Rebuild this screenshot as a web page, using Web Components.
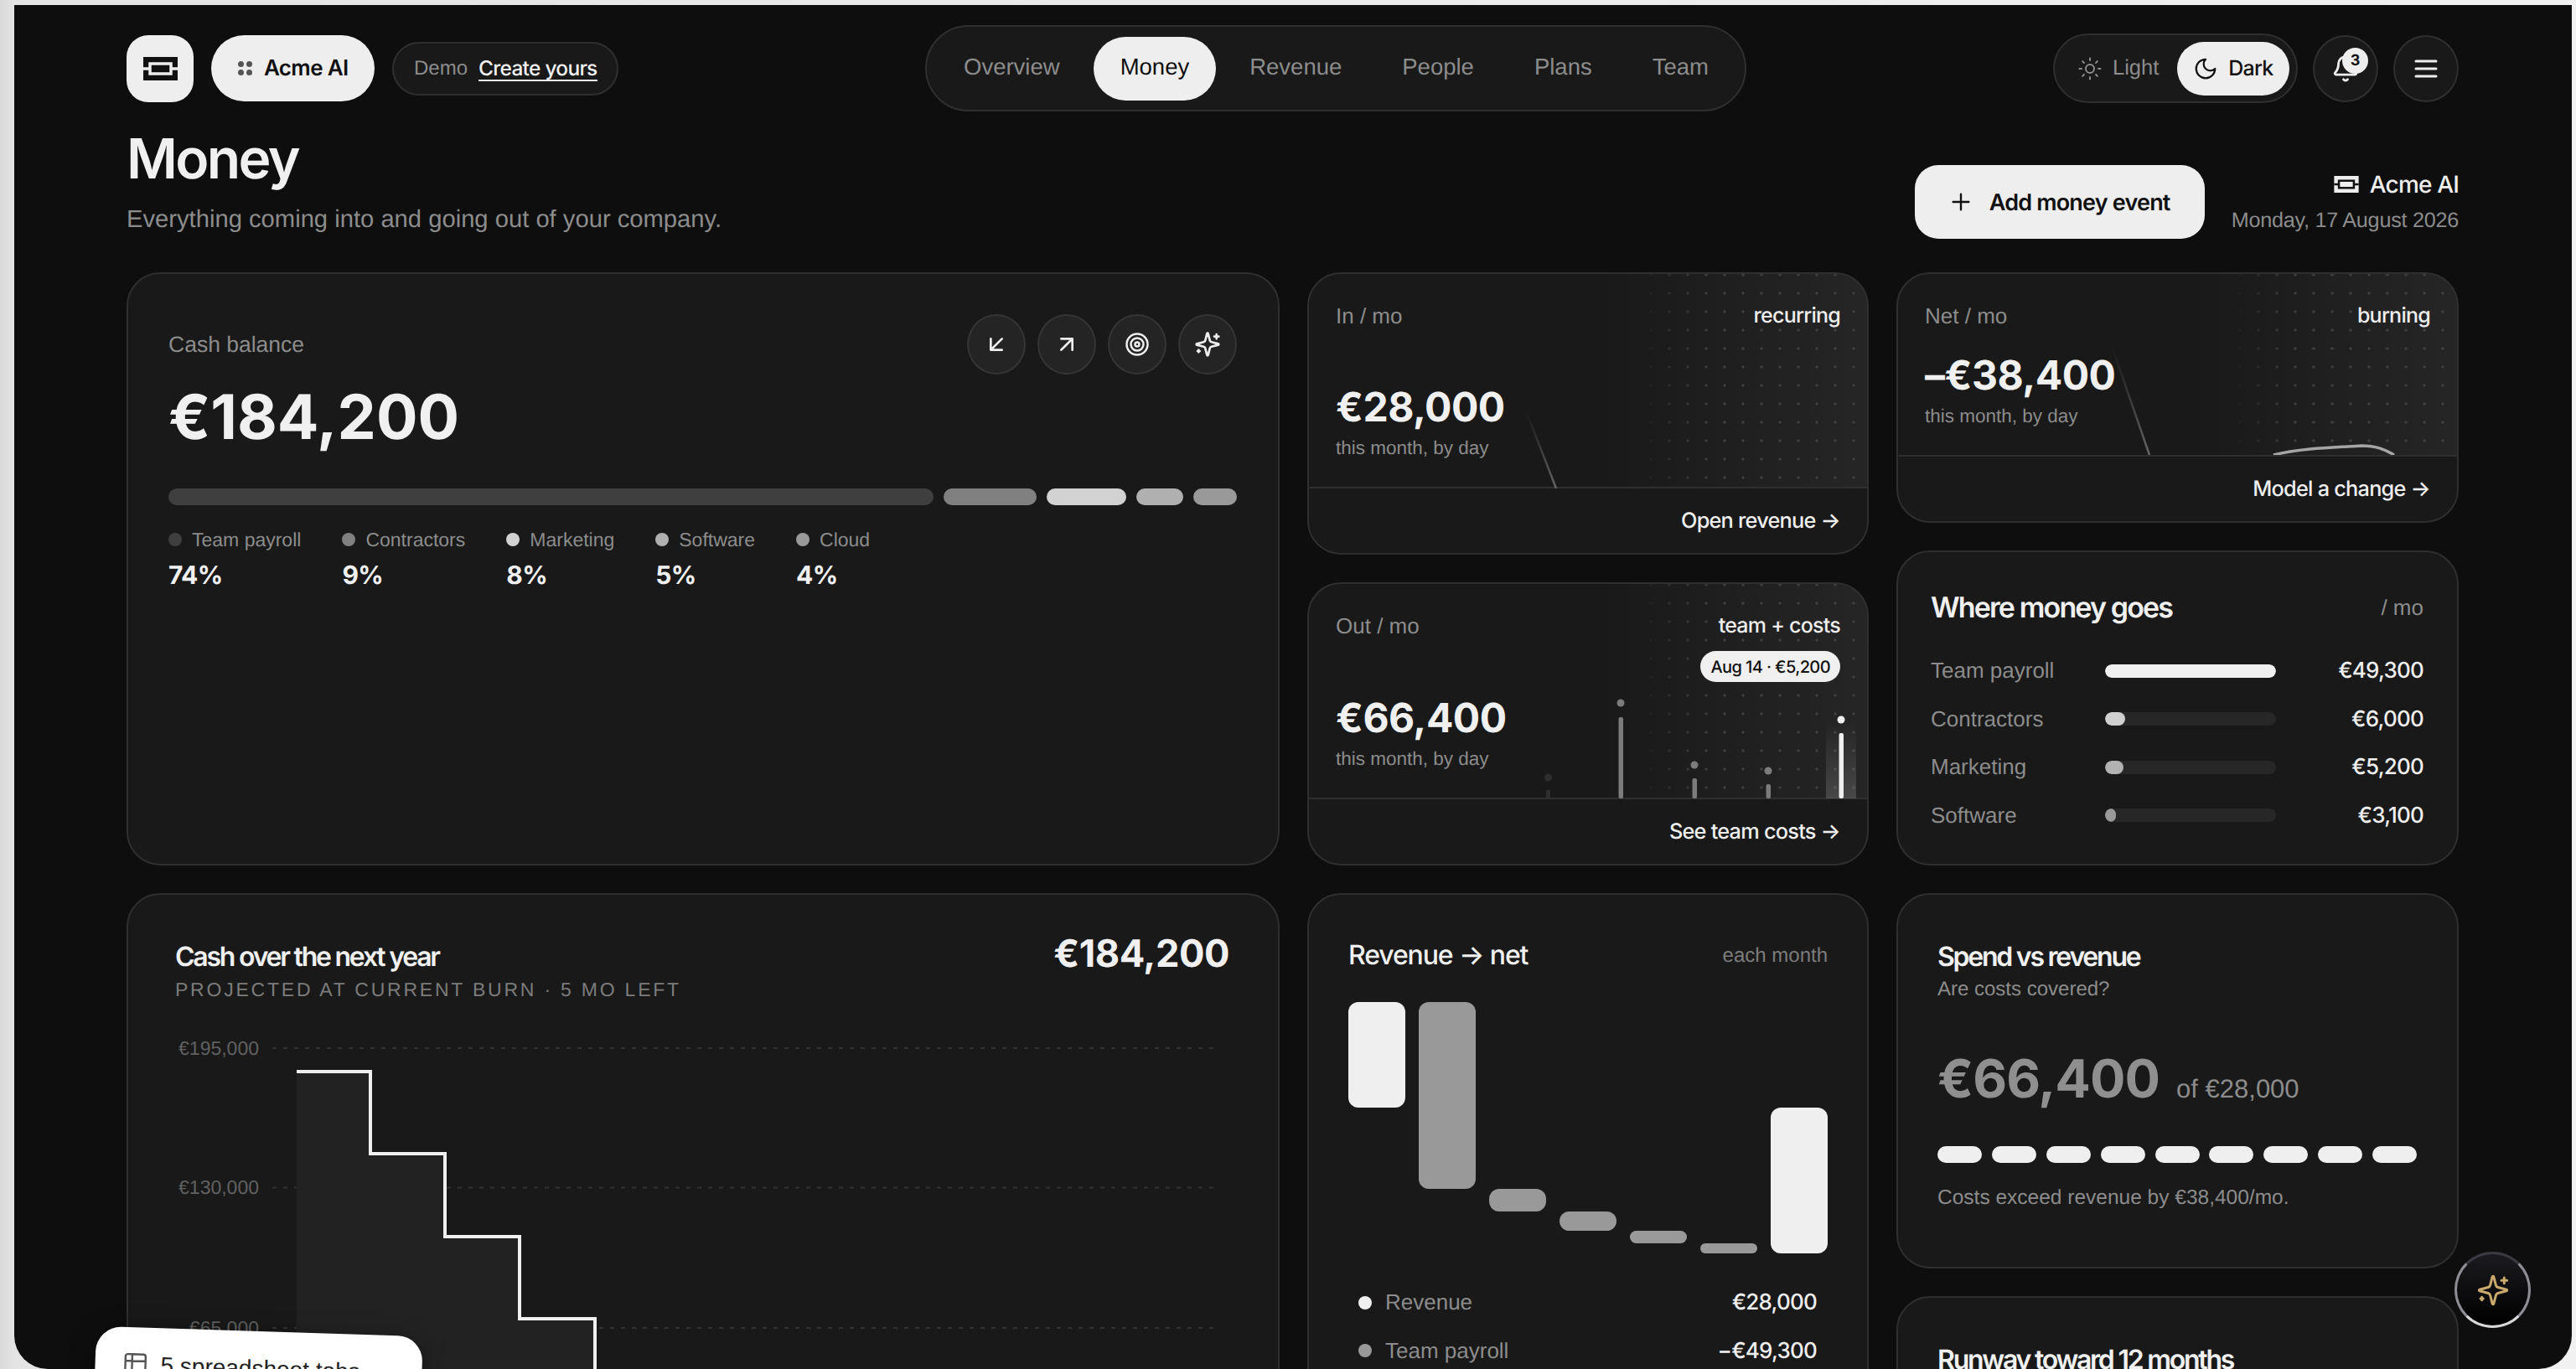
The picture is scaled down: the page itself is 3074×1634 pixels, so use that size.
<!DOCTYPE html>
<html lang="en">
<head>
<meta charset="utf-8">
<title>Money</title>
<style>
  html, body { margin: 0; height: 100%; overflow: hidden; }
  body {
    background: linear-gradient(90deg, #d9d9d9, #e4e4e4 17px, #f1f1f1);
    font-family: "Liberation Sans", Arial, sans-serif;
    color: #efefef;
    text-rendering: geometricPrecision;
  }
</style>
</head>
<body>
<app-frame>
  <top-bar slot="top"></top-bar>
  <page-head slot="top"></page-head>

  <cash-card></cash-card>

  <card-stack style="grid-template-rows: 337px 338px">
    <stat-card label="In / mo" tag="recurring" value="€28,000" link="Open revenue →">
      <svg slot="chart" viewBox="0 0 666 256" width="666" height="256">
        <defs><linearGradient id="fa" x1="0" y1="0" x2="0" y2="1"><stop offset="0" stop-color="#555" stop-opacity="0"/><stop offset="1" stop-color="#666"/></linearGradient></defs>
        <path d="M259 163 L295 256" stroke="url(#fa)" stroke-width="2.5" fill="none"/>
      </svg>
    </stat-card>
    <stat-card label="Out / mo" tag="team + costs" value="€66,400" link="See team costs →">
      <svg slot="chart" viewBox="0 0 666 256" width="666" height="256">
        <defs><linearGradient id="fb" x1="0" y1="0" x2="0" y2="1"><stop offset="0" stop-color="#fff" stop-opacity="0"/><stop offset="1" stop-color="#fff" stop-opacity=".16"/></linearGradient></defs>
        <rect x="617" y="165" width="36" height="91" fill="url(#fb)"/>
        <g fill="#2e2e2e"><rect x="283" y="246" width="5" height="10"/><circle cx="285.5" cy="231" r="4.5"/></g>
        <g fill="#7c7c7c">
          <rect x="369.5" y="159" width="5.5" height="97" rx="2"/><circle cx="372" cy="142" r="4.5"/>
          <rect x="457.5" y="232" width="5.5" height="24" rx="2"/><circle cx="460" cy="216" r="4.5"/>
          <rect x="545.5" y="239" width="5.5" height="17" rx="2"/><circle cx="548" cy="223" r="4.5"/>
        </g>
        <g fill="#eee"><rect x="632.5" y="178" width="5.5" height="78" rx="2"/><circle cx="635" cy="162" r="4.5"/></g>
      </svg>
      <chip-tip slot="chart">Aug 14 · €5,200</chip-tip>
    </stat-card>
  </card-stack>

  <card-stack style="grid-template-rows: 299px 376px">
    <stat-card label="Net / mo" tag="burning" value="–€38,400" link="Model a change →">
      <svg slot="chart" viewBox="0 0 666 216" width="666" height="216">
        <defs><linearGradient id="fc" x1="0" y1="0" x2="0" y2="1"><stop offset="0" stop-color="#555" stop-opacity="0"/><stop offset="1" stop-color="#666"/></linearGradient></defs>
        <path d="M255 86 L300 216" stroke="url(#fc)" stroke-width="2.5" fill="none"/>
        <path d="M448 216 C 480 208 520 207 553 205 C 570 205 580 209 592 216" stroke="#a5a5a5" stroke-width="3.5" fill="none"/>
      </svg>
    </stat-card>
    <where-card>
      <where-row label="Team payroll" value="€49,300" pct="100" color="#f0f0f0"></where-row>
      <where-row label="Contractors" value="€6,000" pct="12" color="#d0d0d0"></where-row>
      <where-row label="Marketing" value="€5,200" pct="11" color="#b2b2b2"></where-row>
      <where-row label="Software" value="€3,100" pct="6.5" color="#999"></where-row>
    </where-card>
  </card-stack>

  <burn-card></burn-card>
  <flow-card>
    <flow-row label="Revenue" value="€28,000" color="#f0f0f0"></flow-row>
    <flow-row label="Team payroll" value="−€49,300" color="#999"></flow-row>
  </flow-card>
  <card-stack style="grid-template-rows: 448px 400px; align-content: start">
    <spend-card></spend-card>
    <runway-card></runway-card>
  </card-stack>

  <fab-button slot="float"></fab-button>
  <sheet-note slot="float"></sheet-note>
</app-frame>

<script>
const MED = '"Inter", "Liberation Sans", sans-serif';

function tpl(css, html) {
  let t = document.createElement('template');
  t.innerHTML = `<style>${css}</style>${html}`;
  return t;
}

class Comp extends HTMLElement {
  constructor() {
    super();
    this.attachShadow({mode: 'open'});
    this.shadowRoot.appendChild(this.constructor.tpl.content.cloneNode(true));
  }
  attr(sel, name) {
    this.shadowRoot.querySelector(sel).textContent = this.getAttribute(name);
  }
}

const ICONS = {
  sun: '<circle cx="12" cy="12" r="4"/><path d="M12 2v2M12 20v2M4.93 4.93l1.41 1.41M17.66 17.66l1.41 1.41M2 12h2M20 12h2M6.34 17.66l-1.41 1.41M19.07 4.93l-1.41 1.41"/>',
  moon: '<path d="M12 3a6 6 0 0 0 9 9 9 9 0 1 1-9-9Z"/>',
  bell: '<path d="M10.268 21a2 2 0 0 0 3.464 0"/><path d="M3.262 15.326A1 1 0 0 0 4 17h16a1 1 0 0 0 .74-1.673C19.41 13.956 18 12.499 18 8A6 6 0 0 0 6 8c0 4.499-1.411 5.956-2.738 7.326"/>',
  menu: '<path d="M4 12h16M4 18h16M4 6h16"/>',
  plus: '<path d="M5 12h14M12 5v14"/>',
  downleft: '<path d="M17 7 7 17M17 17H7V7"/>',
  upright: '<path d="M7 7h10v10M7 17 17 7"/>',
  target: '<circle cx="12" cy="12" r="10"/><circle cx="12" cy="12" r="6"/><circle cx="12" cy="12" r="2"/>',
  sparkles: '<path d="M9.937 15.5A2 2 0 0 0 8.5 14.063l-6.135-1.582a.5.5 0 0 1 0-.962L8.5 9.936A2 2 0 0 0 9.937 8.5l1.582-6.135a.5.5 0 0 1 .963 0L14.063 8.5A2 2 0 0 0 15.5 9.937l6.135 1.581a.5.5 0 0 1 0 .964L15.5 14.063a2 2 0 0 0-1.437 1.437l-1.582 6.135a.5.5 0 0 1-.963 0z"/><path d="M20 3v4M22 5h-4M4 17v2M5 18H3"/>',
  table: '<path d="M9 3H5a2 2 0 0 0-2 2v4m6-6h10a2 2 0 0 1 2 2v4M9 3v18m0 0h10a2 2 0 0 0 2-2V9M9 21H5a2 2 0 0 1-2-2V9m0 0h18"/>'
};

class UiIcon extends HTMLElement {
  constructor() { super(); this.attachShadow({mode: 'open'}); }
  connectedCallback() {
    let s = this.getAttribute('size') || 26;
    let w = this.getAttribute('weight') || 2;
    this.shadowRoot.innerHTML = `<style>:host{display:inline-flex;flex:none}</style>
      <svg width="${s}" height="${s}" viewBox="0 0 24 24" fill="none" stroke="currentColor" stroke-width="${w}" stroke-linecap="round" stroke-linejoin="round">${ICONS[this.getAttribute('name')]}</svg>`;
  }
}
customElements.define('ui-icon', UiIcon);

class BrandMark extends HTMLElement {
  constructor() { super(); this.attachShadow({mode: 'open'}); }
  connectedCallback() {
    let w = this.getAttribute('w') || 41, h = this.getAttribute('h') || 28;
    let a = this.getAttribute('ink') || '#111', b = this.getAttribute('paper') || '#eee';
    this.shadowRoot.innerHTML = `<style>:host{display:inline-flex;flex:none}</style>
      <svg width="${w}" height="${h}" viewBox="0 0 41 28"><rect width="41" height="28" fill="${a}"/>
      <rect x="8" y="8" width="25" height="12" fill="none" stroke="${b}" stroke-width="3.5"/>
      <path d="M0 14h8M33 14h8" stroke="${b}" stroke-width="3.5"/></svg>`;
  }
}
customElements.define('brand-mark', BrandMark);

class AppFrame extends Comp {
  static tpl = tpl(`
    :host { display: block; position: relative; height: 1628px; margin: 6px 5px 0 17px; overflow: hidden;
      background: #0e0e0e; border-radius: 0 0 40px 40px; }
    .wrap { padding: 24px 135px 0 134px; }
    .grid { display: grid; grid-template-columns: 1376px 670px 671px; gap: 33px; grid-template-rows: 708px 900px; }
  `, `<div class="wrap"><slot name="top"></slot><div class="grid"><slot></slot></div></div><slot name="float"></slot>`);
}
customElements.define('app-frame', AppFrame);

class CardStack extends Comp {
  static tpl = tpl(`:host { display: grid; gap: 33px; min-width: 0; }`, `<slot></slot>`);
}
customElements.define('card-stack', CardStack);

const CARD = `display: block; position: relative; box-sizing: border-box; background: #191919; border: 2px solid #2f2f2f; border-radius: 40px; overflow: hidden; min-width: 0;`;

class TopBar extends Comp {
  static tpl = tpl(`
    :host { display: flex; justify-content: space-between; align-items: center; height: 103px; }
    .l, .r { display: flex; align-items: center; }
    .logo { width: 80px; height: 80px; border-radius: 26px; background: #eee; display: grid; place-items: center; }
    .org { margin-left: 21px; height: 79px; width: 195px; box-sizing: border-box; border-radius: 40px; background: #eee; color: #111;
      display: flex; align-items: center; padding-left: 32px; gap: 14px; font: 600 26px ${MED}; letter-spacing: -.025em; }
    .grip { display: grid; grid-template-columns: 7px 7px; gap: 3px; }
    .grip i { width: 7px; height: 7px; border-radius: 50%; background: #555; }
    .demo { margin-left: 21px; height: 64px; width: 270px; box-sizing: border-box; border: 2px solid #2f2f2f; border-radius: 32px; background: #191919;
      display: flex; align-items: center; padding-left: 24px; gap: 13px; font-size: 24px; color: #8c8c8c; }
    .demo b { font: 500 24.5px ${MED}; letter-spacing: -.03em; color: #f0f0f0; border-bottom: 2px solid #f0f0f0; line-height: 28px; }
    .theme { height: 83px; width: 292px; box-sizing: border-box; border: 2px solid #2f2f2f; border-radius: 42px; background: #191919;
      display: flex; align-items: center; padding-left: 27px; font-size: 25.5px; color: #8c8c8c; }
    .theme .light { display: flex; align-items: center; gap: 12px; }
    .theme .dark { margin-left: 22px; height: 64px; width: 134px; box-sizing: border-box; border-radius: 32px; background: #eee; color: #111;
      display: flex; align-items: center; padding-left: 19px; gap: 12px; font: 500 25px ${MED}; letter-spacing: -.03em; }
    .round { position: relative; margin-left: 18px; width: 78px; height: 80px; box-sizing: border-box; border: 2px solid #2f2f2f; border-radius: 50%; background: #191919;
      display: grid; place-items: center; color: #eee; }
    .badge { position: absolute; left: 33px; top: 13px; width: 31px; height: 31px; border-radius: 50%; background: #eee; color: #111;
      font: 700 18px/31px ${MED}; text-align: center; }
  `, `
    <div class="l">
      <div class="logo"><brand-mark></brand-mark></div>
      <div class="org"><span class="grip"><i></i><i></i><i></i><i></i></span>Acme AI</div>
      <div class="demo">Demo <b>Create yours</b></div>
    </div>
    <nav-tabs>
      <nav-tab>Overview</nav-tab><nav-tab active>Money</nav-tab><nav-tab>Revenue</nav-tab><nav-tab>People</nav-tab><nav-tab>Plans</nav-tab><nav-tab>Team</nav-tab>
    </nav-tabs>
    <div class="r">
      <div class="theme">
        <span class="light"><ui-icon name="sun" size="30" weight="1.6"></ui-icon>Light</span>
        <span class="dark"><ui-icon name="moon" size="30" weight="1.8"></ui-icon>Dark</span>
      </div>
      <div class="round"><ui-icon name="bell" size="34" weight="2"></ui-icon><span class="badge">3</span></div>
      <div class="round"><ui-icon name="menu" size="36" weight="2"></ui-icon></div>
    </div>
  `);
}
customElements.define('top-bar', TopBar);

class NavTabs extends Comp {
  static tpl = tpl(`
    :host { display: flex; align-items: center; gap: 8px; height: 103px; box-sizing: border-box; padding: 0 11px 0 12px; border: 2px solid #2f2f2f; border-radius: 52px; background: #191919; }
  `, `<slot></slot>`);
}
customElements.define('nav-tabs', NavTabs);

class NavTab extends Comp {
  static tpl = tpl(`
    :host { display: flex; align-items: center; height: 76px; box-sizing: border-box; padding: 0 32px 3px; border-radius: 38px; color: #8c8c8c; font-size: 27.5px; }
    :host([active]) { background: #eee; color: #0e0e0e; }
  `, `<slot></slot>`);
}
customElements.define('nav-tab', NavTab);

class PageHead extends Comp {
  static tpl = tpl(`
    :host { display: flex; justify-content: space-between; align-items: flex-start; padding-top: 20px; height: 192px; box-sizing: border-box; }
    h1 { margin: 0; font: 600 66px/72px ${MED}; letter-spacing: -.04em; color: #f0f0f0; }
    p { margin: 18px 0 0; font-size: 29.2px; line-height: 38px; color: #8c8c8c; }
    .r { display: flex; align-items: flex-start; margin-top: 44px; gap: 32px; }
    .add { height: 88px; width: 346px; box-sizing: border-box; border-radius: 28px; background: #eee; color: #111; display: flex; align-items: center; padding-left: 39px; gap: 18px;
      font: 600 27px ${MED}; letter-spacing: -.03em; }
    .meta { text-align: right; }
    .who { display: flex; justify-content: flex-end; align-items: center; gap: 13px; font: 500 28px/38px ${MED}; letter-spacing: -.03em; color: #eee; margin-top: 4px; }
    .date { margin-top: 8px; font-size: 25.2px; line-height: 32px; color: #8c8c8c; letter-spacing: -.01em; }
  `, `
    <div><h1>Money</h1><p>Everything coming into and going out of your company.</p></div>
    <div class="r">
      <div class="add"><ui-icon name="plus" size="32" weight="1.8"></ui-icon>Add money event</div>
      <div class="meta">
        <div class="who"><brand-mark w="30" h="20" ink="#eee" paper="#111"></brand-mark>Acme AI</div>
        <div class="date">Monday, 17 August 2026</div>
      </div>
    </div>
  `);
}
customElements.define('page-head', PageHead);

class IconBtn extends Comp {
  static tpl = tpl(`
    :host { display: grid; place-items: center; width: 70px; height: 72px; box-sizing: border-box; border: 2px solid #353535; border-radius: 50%; background: #242424; color: #eee; }
  `, `<slot></slot>`);
}
customElements.define('icon-btn', IconBtn);

class CashCard extends Comp {
  static tpl = tpl(`
    :host { ${CARD} padding: 48px 49px 0 48px; }
    .head { display: flex; justify-content: space-between; align-items: center; }
    .lab { font-size: 26.5px; color: #8c8c8c; }
    .btns { display: flex; gap: 14px; }
    .val { margin-top: 11px; font: 700 73.5px/80px ${MED}; color: #f0f0f0; }
    .bar { margin-top: 45px; display: flex; gap: 12px; height: 20px; }
    .bar i { border-radius: 10px; }
    .mix { margin-top: 26px; display: flex; gap: 49px; }
    .it span { display: flex; align-items: center; gap: 12px; font-size: 23px; line-height: 30px; color: #8c8c8c; }
    .it span i { width: 16px; height: 16px; border-radius: 50%; }
    .it b { display: block; margin-top: 10px; font: 700 30px/36px ${MED}; letter-spacing: -.02em; color: #f0f0f0; }
  `, `
    <div class="head"><div class="lab">Cash balance</div>
      <div class="btns">
        <icon-btn><ui-icon name="downleft" size="32"></ui-icon></icon-btn>
        <icon-btn><ui-icon name="upright" size="32"></ui-icon></icon-btn>
        <icon-btn><ui-icon name="target" size="30"></ui-icon></icon-btn>
        <icon-btn><ui-icon name="sparkles" size="32"></ui-icon></icon-btn>
      </div>
    </div>
    <div class="val">€184,200</div>
    <div class="bar">
      <i style="flex:913;background:#3f3f3f"></i><i style="flex:111;background:#808080"></i><i style="flex:95;background:#d2d2d2"></i><i style="flex:56;background:#b0b0b0"></i><i style="flex:52;background:#999"></i>
    </div>
    <div class="mix">
      <div class="it"><span><i style="background:#3f3f3f"></i>Team payroll</span><b>74%</b></div>
      <div class="it"><span><i style="background:#808080"></i>Contractors</span><b>9%</b></div>
      <div class="it"><span><i style="background:#d2d2d2"></i>Marketing</span><b>8%</b></div>
      <div class="it"><span><i style="background:#b0b0b0"></i>Software</span><b>5%</b></div>
      <div class="it"><span><i style="background:#999"></i>Cloud</span><b>4%</b></div>
    </div>
  `);
}
customElements.define('cash-card', CashCard);

class StatCard extends Comp {
  static tpl = tpl(`
    :host { ${CARD} display: flex; flex-direction: column; }
    .top { position: relative; flex: 1; display: flex; flex-direction: column; justify-content: space-between; padding: 34px 32px 32px; box-sizing: border-box; }
    .dots { position: absolute; inset: 0; background:
        radial-gradient(circle, #3d3d3d 1.4px, transparent 2px) 1px -10px / 22px 22px;
      -webkit-mask-image: linear-gradient(90deg, transparent 58%, #000 72%); mask-image: linear-gradient(90deg, transparent 58%, #000 72%); }
    .glow { position: absolute; inset: 0; background: linear-gradient(90deg, transparent 52%, rgba(255,255,255,.055) 100%); }
    ::slotted(svg) { position: absolute; left: 0; top: 0; }
    .row { position: relative; display: flex; justify-content: space-between; font-size: 26px; line-height: 32px; }
    .lab { color: #8c8c8c; }
    .tag { font: 500 25px/32px ${MED}; letter-spacing: -.03em; color: #eee; }
    .val { font: 700 48px/56px ${MED}; letter-spacing: -.01em; color: #f0f0f0; }
    .sub { margin-top: 7px; font-size: 22.5px; line-height: 28px; color: #8c8c8c; }
    .nums { position: relative; }
    .foot { flex: none; height: 79px; box-sizing: border-box; border-top: 2px solid #2f2f2f; display: flex; justify-content: flex-end; align-items: center; padding: 0 32px; font: 500 25.3px ${MED}; letter-spacing: -.03em; color: #eee; }
  `, `
    <div class="top">
      <div class="glow"></div><div class="dots"></div>
      <slot name="chart"></slot>
      <div class="row"><span class="lab"></span><span class="tag"></span></div>
      <div class="nums"><div class="val"></div><div class="sub">this month, by day</div></div>
    </div>
    <div class="foot"></div>
  `);
  connectedCallback() {
    this.attr('.lab', 'label');
    this.attr('.tag', 'tag');
    this.attr('.val', 'value');
    this.attr('.foot', 'link');
  }
}
customElements.define('stat-card', StatCard);

class ChipTip extends Comp {
  static tpl = tpl(`
    :host { position: absolute; right: 32px; top: 80px; height: 37px; box-sizing: border-box; padding: 0 12px; border-radius: 19px; background: #f0f0f0; color: #111; display: flex; align-items: center; font: 500 20px ${MED}; letter-spacing: -.03em; }
  `, `<slot></slot>`);
}
customElements.define('chip-tip', ChipTip);

class WhereCard extends Comp {
  static tpl = tpl(`
    :host { ${CARD} padding: 47px 40px 0 39px; }
    .head { display: flex; justify-content: space-between; align-items: flex-start; height: 67px; }
    h3 { margin: 0; font: 600 34px/40px ${MED}; letter-spacing: -.055em; color: #f0f0f0; }
    span { font-size: 26px; color: #8c8c8c; line-height: 32px; margin-top: 3px; }
    .rows { display: grid; gap: 0; grid-auto-rows: 57.5px; margin-top: -1px; }
  `, `<div class="head"><h3>Where money goes</h3><span>/ mo</span></div><div class="rows"><slot></slot></div>`);
}
customElements.define('where-card', WhereCard);

class WhereRow extends Comp {
  static tpl = tpl(`
    :host { display: grid; grid-template-columns: 208px 204px 1fr; align-items: center; font-size: 26px; color: #8c8c8c; }
    .track { height: 16px; border-radius: 8px; background: #272727; overflow: hidden; }
    .track i { display: block; height: 100%; border-radius: 8px; }
    b { text-align: right; font: 500 26px ${MED}; letter-spacing: -.03em; color: #eee; }
  `, `<span class="l"></span><div class="track"><i></i></div><b></b>`);
  connectedCallback() {
    this.attr('.l', 'label');
    this.attr('b', 'value');
    let fill = this.shadowRoot.querySelector('i');
    fill.style.width = this.getAttribute('pct') + '%';
    fill.style.background = this.getAttribute('color');
  }
}
customElements.define('where-row', WhereRow);

const TITLE = `margin: 4px 0 0; font: 600 32px/40px ${MED}; letter-spacing: -.07em; color: #f0f0f0;`;

class BurnCard extends Comp {
  static tpl = tpl(`
    :host { ${CARD} padding: 50px 58px 0 56px; }
    .head { display: flex; justify-content: space-between; align-items: flex-start; height: 67px; }
    h3 { ${TITLE} }
    .sub { margin-top: 2px; font-size: 23px; line-height: 34px; letter-spacing: .121em; color: #7c7c7c; white-space: nowrap; }
    .big { font: 700 45.2px/40px ${MED}; letter-spacing: -.01em; color: #f0f0f0; }
    svg { display: block; margin: 0 0 0 -56px; }
    text { font: 23px "Liberation Sans", sans-serif; fill: #616161; }
  `, `
    <div class="head"><div><h3>Cash over the next year</h3><div class="sub">PROJECTED AT CURRENT BURN · 5 MO LEFT</div></div><div class="big">€184,200</div></div>
    <svg width="1372" height="560" viewBox="0 0 1372 560">
      <g stroke="#333" stroke-width="2" stroke-dasharray="5 8">
        <path d="M172 66H1299M172 232.5H1299M172 400H1299"/>
      </g>
      <text x="156" y="74" text-anchor="end">€195,000</text>
      <text x="156" y="240" text-anchor="end">€130,000</text>
      <text x="156" y="408" text-anchor="end">€65,000</text>
      <path d="M201 94H289V192H378V291H467V389H557V560H201Z" fill="#222"/>
      <path d="M201 94H289V192H378V291H467V389H557V560" fill="none" stroke="#f0f0f0" stroke-width="4"/>
    </svg>
  `);
}
customElements.define('burn-card', BurnCard);

class FlowCard extends Comp {
  static tpl = tpl(`
    :host { ${CARD} padding: 50px 47px 0; }
    .head { display: flex; justify-content: space-between; align-items: flex-start; height: 78px; }
    h3 { margin: 2px 0 0; font: 500 32px/40px ${MED}; letter-spacing: -.035em; color: #f0f0f0; }
    .each { font-size: 24px; line-height: 46px; color: #7c7c7c; }
    .bars { display: flex; gap: 16px; height: 300px; align-items: flex-start; }
    .bars i { flex: 0 0 68px; border-radius: 12px; box-sizing: border-box; }
    .w { background: #efefef; } .g { background: #999; }
    .rows { margin-top: 30px; display: grid; grid-auto-rows: 57.5px; padding: 0 13px 0 12px; }
  `, `
    <div class="head"><h3>Revenue → net</h3><span class="each">each month</span></div>
    <div class="bars">
      <i class="w" style="height:126px"></i>
      <i class="g" style="height:222.5px"></i>
      <i class="g" style="margin-top:222.5px;height:27.5px"></i>
      <i class="g" style="margin-top:250px;height:23px"></i>
      <i class="g" style="margin-top:273px;height:15px"></i>
      <i class="g" style="margin-top:288px;height:12px"></i>
      <i class="w" style="margin-top:126px;height:174px"></i>
    </div>
    <div class="rows"><slot></slot></div>
  `);
}
customElements.define('flow-card', FlowCard);

class FlowRow extends Comp {
  static tpl = tpl(`
    :host { display: flex; align-items: center; font-size: 26px; color: #8c8c8c; }
    i { width: 16px; height: 16px; border-radius: 50%; margin-right: 16px; }
    b { margin-left: auto; font: 500 26px ${MED}; letter-spacing: -.03em; color: #eee; }
  `, `<i></i><span></span><b></b>`);
  connectedCallback() {
    this.attr('span', 'label');
    this.attr('b', 'value');
    this.shadowRoot.querySelector('i').style.background = this.getAttribute('color');
  }
}
customElements.define('flow-row', FlowRow);

class SpendCard extends Comp {
  static tpl = tpl(`
    :host { ${CARD} padding: 50px 47px 0; }
    h3 { ${TITLE} }
    .q { margin-top: 2px; font-size: 24px; line-height: 34px; color: #8c8c8c; }
    .big { margin-top: 52px; display: flex; align-items: baseline; gap: 20px; color: #8c8c8c; font-size: 31px; }
    .big b { font: 700 63px/76px ${MED}; letter-spacing: -.015em; color: #8f8f8f; }
    .pills { margin-top: 42px; display: flex; justify-content: space-between; width: 572px; }
    .pills i { width: 53px; height: 20px; border-radius: 10px; background: #efefef; }
    .note { margin-top: 26px; font-size: 24.5px; line-height: 32px; color: #8c8c8c; }
  `, `
    <h3>Spend vs revenue</h3>
    <div class="q">Are costs covered?</div>
    <div class="big"><b>€66,400</b> of €28,000</div>
    <div class="pills"><i></i><i></i><i></i><i></i><i></i><i></i><i></i><i></i><i></i></div>
    <div class="note">Costs exceed revenue by €38,400/mo.</div>
  `);
}
customElements.define('spend-card', SpendCard);

class RunwayCard extends Comp {
  static tpl = tpl(`
    :host { ${CARD} padding: 50px 47px 0; }
    h3 { ${TITLE} }
  `, `<h3>Runway toward 12 months</h3>`);
}
customElements.define('runway-card', RunwayCard);

class FabButton extends Comp {
  static tpl = tpl(`
    :host { position: absolute; left: 2912px; top: 1488px; width: 91px; height: 91px; box-sizing: border-box; border-radius: 50%;
      background: linear-gradient(#1b1b1f, #000); border: 3px solid #8d8d95; border-top-color: #3a3a42; border-bottom-color: #d8d8d8;
      display: grid; place-items: center; color: #c9a96c; }
  `, `<ui-icon name="sparkles" size="40" weight="1.8"></ui-icon>`);
}
customElements.define('fab-button', FabButton);

class SheetNote extends Comp {
  static tpl = tpl(`
    :host { position: absolute; left: 96px; top: 1583px; width: 390px; height: 120px; box-sizing: border-box; padding: 28px 0 0 32px; border-radius: 30px; background: #fff; color: #222;
      transform: rotate(1.8deg); display: flex; align-items: flex-start; gap: 14px; font-size: 28px; line-height: 34px; white-space: nowrap; box-shadow: 0 6px 30px rgba(0,0,0,.4); }
    span { color: #aaa; }
    ui-icon { color: #555; }
  `, `<ui-icon name="table" size="32" weight="1.8"></ui-icon><div>5 spreadsheet tabs <span>…</span></div>`);
}
customElements.define('sheet-note', SheetNote);
</script>
</body>
</html>
